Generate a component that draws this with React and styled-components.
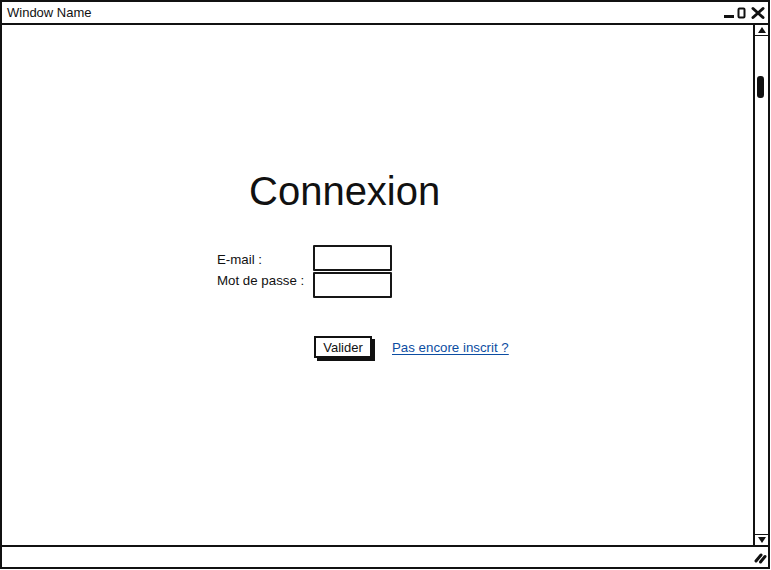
import React from 'react';
import styled, { createGlobalStyle } from 'styled-components';

const Global = createGlobalStyle`
  html, body { margin: 0; padding: 0; background: #fff; }
  body {
    font-family: "Liberation Sans", Arial, sans-serif;
    color: #111;
  }
`;

const Frame = styled.div`
  box-sizing: border-box;
  width: 770px;
  height: 569px;
  border: 2px solid #111;
  display: flex;
  flex-direction: column;
  background: #fff;
`;

const TitleBar = styled.div`
  height: 21px;
  border-bottom: 2px solid #111;
  display: flex;
  align-items: center;
  justify-content: space-between;
  padding: 0 3px 0 5px;
  font-size: 13px;
`;

const Body = styled.div`
  flex: 1;
  display: flex;
  min-height: 0;
`;

const Main = styled.div`
  flex: 1;
  padding: 143px 0 0 215px;
`;

const Heading = styled.h1`
  margin: 0 0 31px 32px;
  font-size: 40px;
  line-height: 46px;
  font-weight: normal;
`;

const Form = styled.div`
  display: flex;
`;

const Labels = styled.div`
  width: 96px;
  padding-top: 4px;
  display: flex;
  flex-direction: column;
  font-size: 13.3px;
  line-height: 21px;
`;

const Fields = styled.div`
  display: flex;
  flex-direction: column;
  gap: 1px;
`;

const Field = styled.div`
  box-sizing: border-box;
  width: 79px;
  height: 26px;
  border: 2px solid #161616;
  border-radius: 1px;
  background: #fff;
`;

const Actions = styled.div`
  display: flex;
  align-items: center;
  gap: 20px;
  margin: 38px 0 0 97px;
`;

const Button = styled.div`
  box-sizing: border-box;
  width: 58px;
  height: 22px;
  border: 2px solid #111;
  box-shadow: 3px 3px 0 #111;
  display: flex;
  align-items: center;
  justify-content: center;
  font-size: 13px;
`;

const Link = styled.a`
  font-size: 13.3px;
  color: #0c4da2;
  text-decoration: underline;
  text-underline-offset: 2px;
`;

const Scrollbar = styled.div`
  width: 13px;
  border-left: 2px solid #111;
  display: flex;
  flex-direction: column;
`;

const Arrow = styled.div`
  height: 10px;
  display: flex;
  align-items: center;
  justify-content: center;
  border-${(p) => (p.$down ? 'top' : 'bottom')}: 1px solid #111;
  ${(p) => (p.$down ? 'margin-top: auto;' : '')}
`;

const Thumb = styled.div`
  width: 7px;
  height: 22px;
  margin: 40px 0 0 2px;
  border-radius: 3px;
  background: #111;
`;

const StatusBar = styled.div`
  height: 20px;
  border-top: 2px solid #111;
  display: flex;
  align-items: center;
  justify-content: flex-end;
  padding-right: 1px;
`;

const Controls = () => (
  <svg width="42" height="14" viewBox="0 0 42 14">
    <rect x="1" y="9" width="10" height="3" fill="#111" />
    <rect x="15.5" y="2.5" width="6" height="9" rx="1" fill="none" stroke="#111" strokeWidth="2" />
    <path d="M30 2.5 L40 11.5 M40 2.5 L30 11.5" stroke="#111" strokeWidth="3" strokeLinecap="round" />
  </svg>
);

const Tri = ({ down }) => (
  <svg width="8" height="6" viewBox="0 0 8 6">
    <path d={down ? 'M0 0 H8 L4 6 Z' : 'M0 6 H8 L4 0 Z'} fill="#111" />
  </svg>
);

const Grip = () => (
  <svg width="13" height="13" viewBox="0 0 13 13">
    <path d="M2 10 L7 4 M6.5 11 L11 5.5" stroke="#111" strokeWidth="3" strokeLinecap="round" />
  </svg>
);

export default function App() {
  return (
    <>
      <Global />
      <Frame>
        <TitleBar>
          <span>Window Name</span>
          <Controls />
        </TitleBar>
        <Body>
          <Main>
            <Heading>Connexion</Heading>
            <Form>
              <Labels>
                <span>E-mail :</span>
                <span>Mot de passe :</span>
              </Labels>
              <Fields>
                <Field />
                <Field />
              </Fields>
            </Form>
            <Actions>
              <Button>Valider</Button>
              <Link href="#">Pas encore inscrit ?</Link>
            </Actions>
          </Main>
          <Scrollbar>
            <Arrow><Tri /></Arrow>
            <Thumb />
            <Arrow $down><Tri down /></Arrow>
          </Scrollbar>
        </Body>
        <StatusBar>
          <Grip />
        </StatusBar>
      </Frame>
    </>
  );
}
